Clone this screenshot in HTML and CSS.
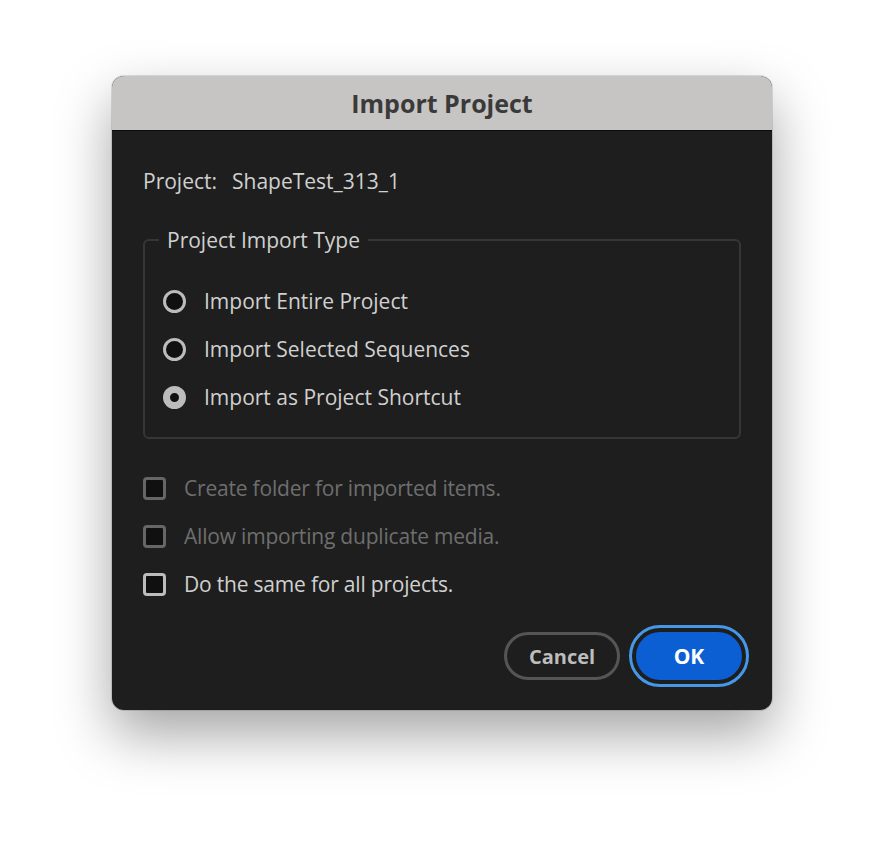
FILE: index.html
```html
<!DOCTYPE html>
<html>
<head>
<meta charset="utf-8">
<link rel="stylesheet" href="styles.css">
</head>
<body>
<div class="dialog">
  <div class="titlebar">Import Project</div>
  <div class="content">
    <div class="project-row"><span class="label">Project:</span><span class="value">ShapeTest_313_1</span></div>
    <div class="group">
      <span class="legend">Project Import Type</span>
      <div class="opt"><span class="radio"></span><span>Import Entire Project</span></div>
      <div class="opt"><span class="radio"></span><span>Import Selected Sequences</span></div>
      <div class="opt"><span class="radio checked"></span><span>Import as Project Shortcut</span></div>
    </div>
    <div class="checks">
      <div class="chk disabled"><span class="box"></span><span>Create folder for imported items.</span></div>
      <div class="chk disabled"><span class="box"></span><span>Allow importing duplicate media.</span></div>
      <div class="chk"><span class="box"></span><span>Do the same for all projects.</span></div>
    </div>
    <div class="buttons">
      <button class="btn cancel">Cancel</button>
      <button class="btn ok">OK</button>
    </div>
  </div>
</div>
</body>
</html>
```
FILE: styles.css
```css
html, body {
  margin: 0;
  padding: 0;
  background: #ffffff;
}
body {
  padding-top: 76px;
  min-height: 858px;
  box-sizing: border-box;
  font-family: "Open Sans", "Noto Sans", sans-serif;
}
.dialog {
  margin-left: 112px;
  width: 660px;
  border-radius: 12px;
  overflow: hidden;
  background: #1e1e1e;
  box-shadow: 0 0 0 1px rgba(0,0,0,0.12), 0 24px 55px rgba(0,0,0,0.36);
}
.titlebar {
  height: 54px;
  line-height: 54px;
  background: #c6c5c3;
  border-bottom: 1px solid #0c0c0c;
  text-align: center;
  font-weight: 700;
  font-size: 25px;
  color: #3a3a3a;
}
.content {
  padding: 35px 30px 30px 31px;
  color: #d0d0d0;
  font-size: 21px;
}
.project-row {
  height: 30px;
  line-height: 30px;
  display: flex;
  gap: 15px;
}
.group {
  position: relative;
  margin-top: 43px;
  width: 598px;
  box-sizing: border-box;
  border: 2px solid #363636;
  border-radius: 6px;
  padding: 36px 0 16px 18px;
}
.legend {
  position: absolute;
  top: -16px;
  left: 14px;
  padding: 0 8px;
  background: #1e1e1e;
  line-height: 30px;
}
.opt, .chk {
  height: 48px;
  display: flex;
  align-items: center;
  gap: 18px;
}
.chk { letter-spacing: -0.2px; }
.radio {
  width: 23px;
  height: 23px;
  box-sizing: border-box;
  border: 3px solid #bcbcbc;
  border-radius: 50%;
  background: #101010;
  flex: none;
}
.radio.checked {
  border: 7px solid #bcbcbc;
}
.checks {
  margin-top: 25px;
}
.box {
  width: 23px;
  height: 23px;
  box-sizing: border-box;
  border: 3px solid #bcbcbc;
  border-radius: 4px;
  background: #101010;
  flex: none;
}
.chk.disabled { color: #6e6e6e; }
.chk.disabled .box { border-color: #666666; }
.buttons {
  margin-top: 24px;
  display: flex;
  justify-content: flex-end;
  gap: 16px;
}
.btn {
  height: 48px;
  border-radius: 24px;
  font-family: "Open Sans", "Noto Sans", sans-serif;
  font-weight: 700;
  font-size: 20px;
  padding: 0;
  cursor: default;
}
.cancel {
  width: 116px;
  background: transparent;
  border: 3px solid #555555;
  color: #bdbdbd;
}
.ok {
  width: 106px;
  background: #0b5fd2;
  border: none;
  color: #ffffff;
  font-size: 21px;
  outline: 3px solid #4597e8;
  outline-offset: 4px;
}
```
